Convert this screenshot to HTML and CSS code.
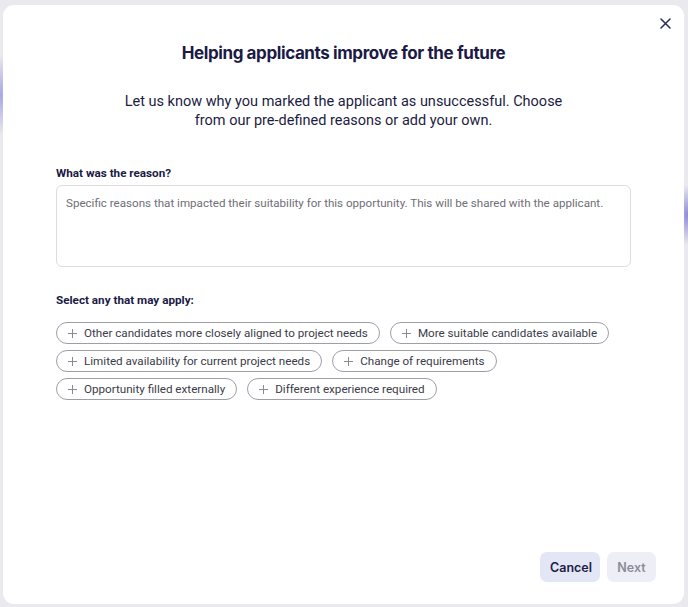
FILE: index.html
```html
<!DOCTYPE html>
<html lang="en">
<head>
<meta charset="utf-8">
<title>Helping applicants improve</title>
<link rel="stylesheet" href="styles.css">
</head>
<body>
<div class="backdrop">
  <div class="modal">
    <button class="close" aria-label="Close">
      <svg width="11" height="11" viewBox="0 0 11 11"><path d="M1 1L10 10M10 1L1 10" stroke="#2a2856" stroke-width="1.5" stroke-linecap="round"/></svg>
    </button>
    <div class="content">
      <h1 class="title">Helping applicants improve for the future</h1>
      <p class="intro">Let us know why you marked the applicant as unsuccessful. Choose<br>from our pre-defined reasons or add your own.</p>
      <label class="label">What was the reason?</label>
      <div class="textarea">Specific reasons that impacted their suitability for this opportunity. This will be shared with the applicant.</div>
      <div class="label label-select">Select any that may apply:</div>
      <div class="chips">
        <span class="chip"><svg class="plus" width="9" height="9" viewBox="0 0 9 9"><path d="M4.5 0V9M0 4.5H9" stroke="#8a8a96" stroke-width="1"/></svg>Other candidates more closely aligned to project needs</span>
        <span class="chip"><svg class="plus" width="9" height="9" viewBox="0 0 9 9"><path d="M4.5 0V9M0 4.5H9" stroke="#8a8a96" stroke-width="1"/></svg>More suitable candidates available</span>
        <span class="chip"><svg class="plus" width="9" height="9" viewBox="0 0 9 9"><path d="M4.5 0V9M0 4.5H9" stroke="#8a8a96" stroke-width="1"/></svg>Limited availability for current project needs</span>
        <span class="chip"><svg class="plus" width="9" height="9" viewBox="0 0 9 9"><path d="M4.5 0V9M0 4.5H9" stroke="#8a8a96" stroke-width="1"/></svg>Change of requirements</span>
        <span class="chip"><svg class="plus" width="9" height="9" viewBox="0 0 9 9"><path d="M4.5 0V9M0 4.5H9" stroke="#8a8a96" stroke-width="1"/></svg>Opportunity filled externally</span>
        <span class="chip"><svg class="plus" width="9" height="9" viewBox="0 0 9 9"><path d="M4.5 0V9M0 4.5H9" stroke="#8a8a96" stroke-width="1"/></svg>Different experience required</span>
      </div>
    </div>
    <div class="footer">
      <button class="btn btn-cancel">Cancel</button>
      <button class="btn btn-next">Next</button>
    </div>
  </div>
</div>
</body>
</html>
```
FILE: styles.css
```css
* { box-sizing: border-box; }
html, body { margin: 0; padding: 0; }
body {
  width: 688px;
  height: 607px;
  overflow: hidden;
  font-family: Roboto, "Noto Sans", sans-serif;
  background:
    radial-gradient(ellipse 20px 40px at 0px 95px, #a9a6e6 0%, rgba(169,166,230,0) 100%),
    radial-gradient(ellipse 20px 30px at 688px 215px, #8f8bd8 0%, rgba(143,139,216,0) 100%),
    #e9e9ee;
}
.backdrop {
  padding: 5px 4px 3px 3px;
  height: 607px;
}
.modal {
  position: relative;
  height: 599px;
  background: #fff;
  border-radius: 11px;
  display: flex;
  flex-direction: column;
  justify-content: space-between;
}
.close {
  position: absolute;
  top: 12px;
  right: 12px;
  width: 13px;
  height: 13px;
  padding: 1px;
  border: 0;
  background: none;
  display: flex;
}
.content {
  padding: 37px 53px 0 53px;
  display: flex;
  flex-direction: column;
}
.title {
  margin: 0;
  text-align: center;
  font-family: Inter, "Noto Sans", sans-serif;
  font-size: 17px;
  font-weight: 700;
  color: #1b1a47;
  letter-spacing: -0.4px;
  line-height: 22px;
}
.intro {
  margin: 28px 0 0;
  text-align: center;
  font-size: 14.5px;
  line-height: 19px;
  color: #1d1c3f;
}
.label {
  margin-top: 35px;
  font-size: 11.7px;
  font-weight: 700;
  color: #1b1a47;
  line-height: 16px;
}
.textarea {
  margin-top: 4px;
  height: 82px;
  border: 1px solid #dcdce2;
  border-radius: 6px;
  padding: 9px 9px;
  font-size: 11.6px;
  line-height: 16px;
  color: #6e6e78;
  white-space: nowrap;
}
.label-select { margin-top: 25px; }
.chips {
  margin-top: 14px;
  display: flex;
  flex-wrap: wrap;
  gap: 6px 10px;
}
.chip {
  display: inline-flex;
  align-items: center;
  height: 22px;
  padding: 0 11px 0 11px;
  border: 1px solid #9e9eaa;
  border-radius: 11px;
  font-size: 11.65px;
  color: #3b3b49;
  white-space: nowrap;
}
.plus { margin-right: 7px; }
.footer {
  display: flex;
  justify-content: flex-end;
  gap: 7px;
  padding: 0 28px 22px 0;
}
.btn {
  height: 30px;
  border: 0;
  border-radius: 7px;
  font-family: Inter, "Noto Sans", sans-serif;
  font-size: 12.5px;
  font-weight: 600;
  padding: 0 10px;
}
.btn-cancel { background: #e2e6f5; color: #1e1d4a; width: 60px; }
.btn-next { background: #eeeef7; color: #8b8b96; width: 49px; }
```
